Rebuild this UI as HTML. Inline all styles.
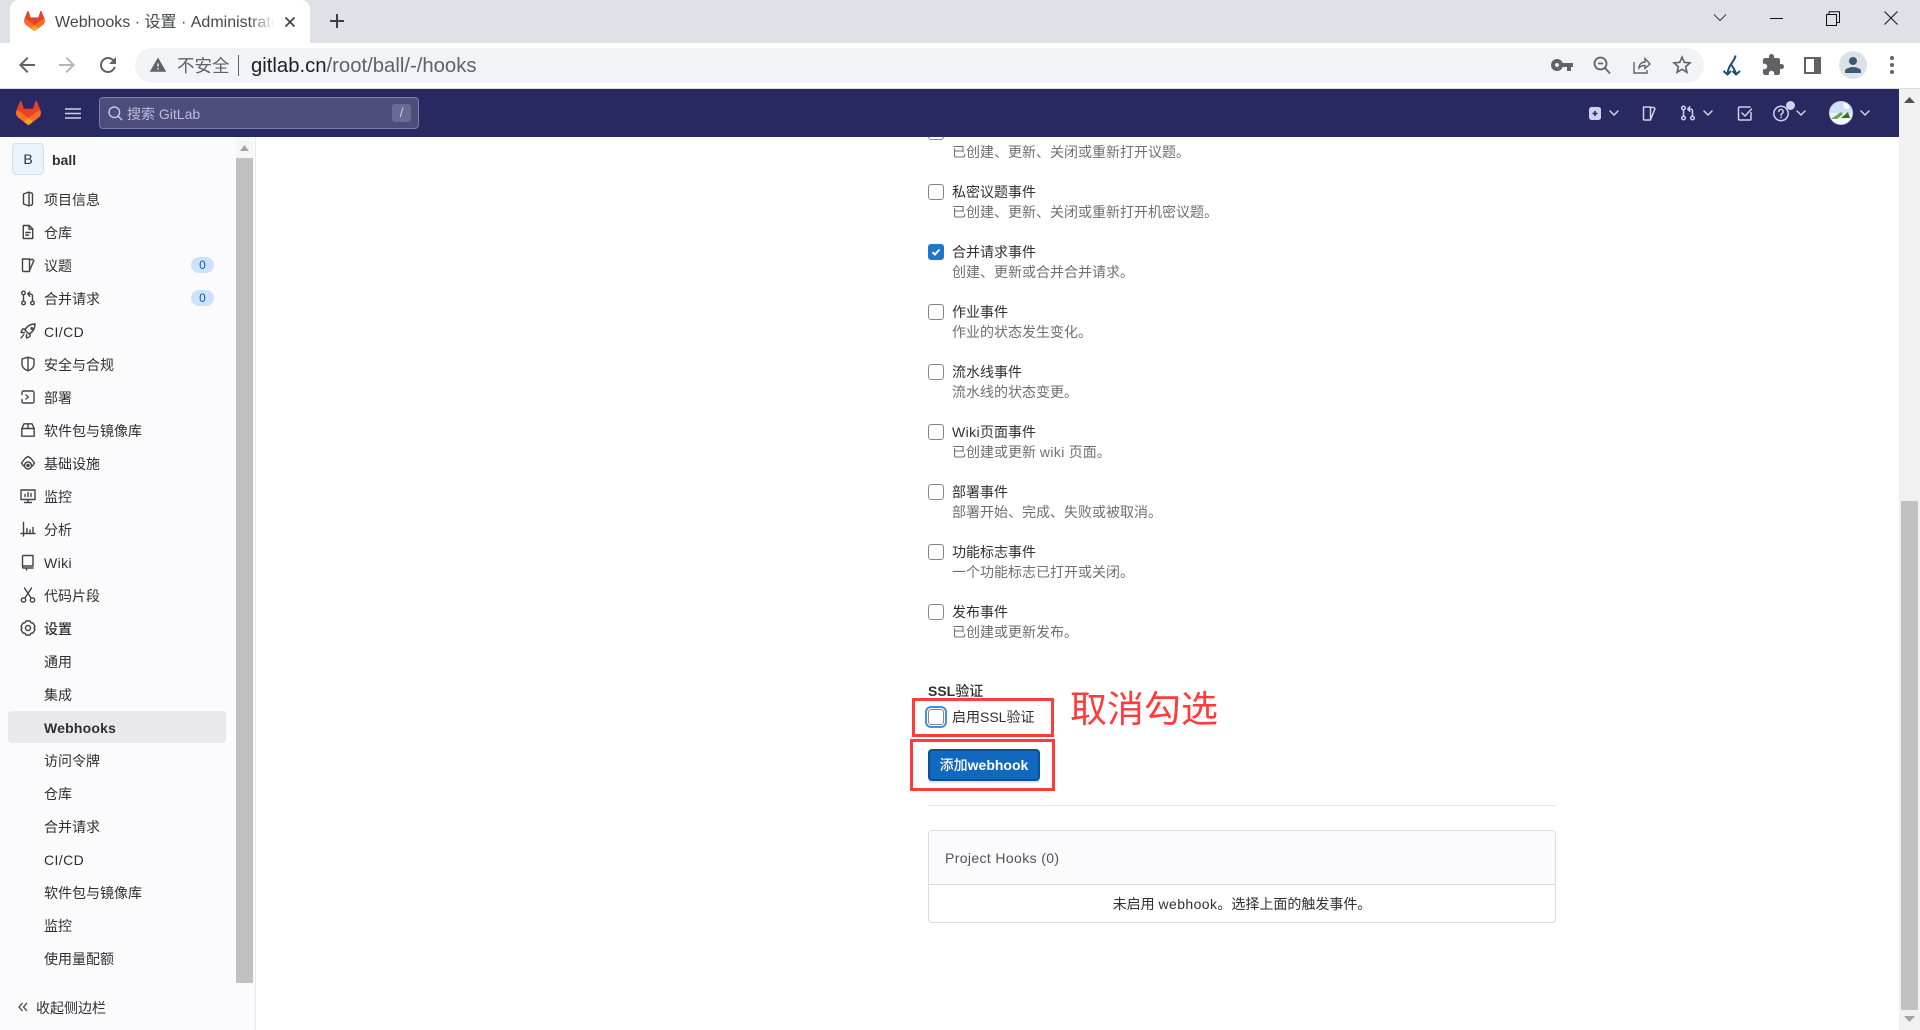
<!DOCTYPE html>
<html lang="zh">
<head>
<meta charset="utf-8">
<title>Webhooks · 设置 · Administrator</title>
<style>
html,body{margin:0;padding:0;width:1920px;height:1030px;overflow:hidden;background:#fff}
body{position:relative;font-family:"Liberation Sans","Noto Sans CJK SC",sans-serif;font-size:14px;color:#303030}
div,svg,span.a{position:absolute}
.t{height:20px;line-height:20px;white-space:nowrap}
.d{color:#6f6e75}
.b{font-weight:bold}
.m{font-weight:500}
.l{letter-spacing:.4px}
svg{overflow:visible}
.i{width:16px;height:16px;left:20px;fill:none;stroke:#444348;stroke-width:1.4;stroke-linecap:round;stroke-linejoin:round}
.h{fill:none;stroke:#d1d0e9;stroke-width:1.5;stroke-linecap:round;stroke-linejoin:round;width:16px;height:16px}
.c{left:928px;width:14px;height:14px;border:1px solid #89888d;border-radius:3px;background:#fff}
.g{fill:#5f6368;width:24px;height:24px}
</style>
</head>
<body>
<!-- tab strip -->
<div style="left:0;top:0;width:1920px;height:43px;background:#dee1e6"></div>
<div style="left:10px;top:0;width:300px;height:43px;background:#fff;border-radius:9px 9px 0 0"></div>
<svg style="left:24px;top:11px;width:21px;height:20px" viewBox="0 0 25 24">
<path d="m24.507 9.5-.034-.09L21.082.562a.896.896 0 0 0-1.694.091l-2.29 7.01H7.825L5.535.653a.898.898 0 0 0-1.694-.09L.451 9.411.416 9.5a6.297 6.297 0 0 0 2.09 7.278l.012.01.03.022 5.16 3.867 2.56 1.935 1.554 1.176a1.051 1.051 0 0 0 1.268 0l1.555-1.176 2.56-1.935 5.197-3.89.014-.01A6.297 6.297 0 0 0 24.507 9.5Z" fill="#E24329"/>
<path d="m24.507 9.5-.034-.09a11.44 11.44 0 0 0-4.56 2.051l-7.447 5.632 4.742 3.584 5.197-3.89.014-.01A6.297 6.297 0 0 0 24.507 9.5Z" fill="#FC6D26"/>
<path d="m7.707 20.677 2.56 1.935 1.555 1.176a1.051 1.051 0 0 0 1.268 0l1.555-1.176 2.56-1.935-4.743-3.584-4.755 3.584Z" fill="#FCA326"/>
<path d="M5.01 11.461a11.43 11.43 0 0 0-4.56-2.05L.416 9.5a6.297 6.297 0 0 0 2.09 7.278l.012.01.03.022 5.16 3.867 4.745-3.584-7.444-5.632Z" fill="#FC6D26"/>
</svg>
<div class="t" style="left:55px;top:13px;width:220px;overflow:hidden;font-size:16px;color:#45474a;-webkit-mask-image:linear-gradient(90deg,#000 88%,transparent);mask-image:linear-gradient(90deg,#000 88%,transparent)">Webhooks · 设置 · Administrator</div>
<svg style="left:284px;top:16px;width:12px;height:12px" viewBox="0 0 12 12"><path d="M1.500 1.500l9 9M10.500 1.500l-9 9" stroke="#3c4043" stroke-width="1.600" fill="none"/></svg>
<svg style="left:329px;top:13px;width:16px;height:16px" viewBox="0 0 16 16"><path d="M8 1v14M1 8h14" stroke="#3c4043" stroke-width="2" fill="none"/></svg>
<svg style="left:1713px;top:13px;width:14px;height:10px" viewBox="0 0 14 10"><path d="M1 1.500l6 6 6-6" stroke="#3c4043" stroke-width="1" fill="none"/></svg>
<div style="left:1770px;top:18px;width:13px;height:1.2px;background:#111"></div>
<svg style="left:1826px;top:11px;width:14px;height:15px" viewBox="0 0 14 15"><path d="M.5 3.500h10v11H.5zM3 3.500V.8h10.500v10.700h-3" stroke="#111" stroke-width="1" fill="none"/></svg>
<svg style="left:1884px;top:11px;width:14px;height:14px" viewBox="0 0 14 14"><path d="M.5.5l13 13M13.500.5l-13 13" stroke="#111" stroke-width="1" fill="none"/></svg>

<!-- toolbar -->
<div style="left:0;top:43px;width:1920px;height:45px;background:#fff"></div>
<div style="left:0;top:88px;width:1920px;height:1px;background:#dadce0"></div>
<div style="left:135px;top:48px;width:1569px;height:35px;border-radius:18px;background:#f1f3f4"></div>
<svg class="g" style="left:15px;top:53px" viewBox="0 0 24 24"><path d="M20 11H7.830l5.590-5.590L12 4l-8 8 8 8 1.410-1.410L7.830 13H20v-2z"/></svg>
<svg class="g" style="left:55px;top:53px;fill:#b4b6b9" viewBox="0 0 24 24"><path d="M12 4l-1.410 1.410L16.170 11H4v2h12.170l-5.580 5.590L12 20l8-8z"/></svg>
<svg class="g" style="left:96px;top:53px" viewBox="0 0 24 24"><path d="M17.650 6.350C16.200 4.900 14.210 4 12 4c-4.420 0-7.990 3.580-7.990 8s3.570 8 7.990 8c3.730 0 6.840-2.550 7.730-6h-2.080c-.82 2.330-3.040 4-5.650 4-3.310 0-6-2.690-6-6s2.690-6 6-6c1.660 0 3.140.69 4.220 1.780L13 11h7V4l-2.350 2.350z"/></svg>
<svg style="left:149px;top:56px;width:18px;height:18px;fill:#5f6368" viewBox="0 0 24 24"><path d="M1 21h22L12 2 1 21zm12-3h-2v-2h2v2zm0-4h-2v-4h2v4z"/></svg>
<div class="t" style="left:177px;top:56px;font-size:17.5px;color:#5f6368">不安全</div>
<div style="left:238px;top:55px;width:1px;height:21px;background:#5f6368"></div>
<div class="t" style="left:251px;top:56px;font-size:20.3px;color:#5f6368"><span style="color:#202124">gitlab.cn</span>/root/ball/-/hooks</div>
<svg class="g" style="left:1550px;top:53px" viewBox="0 0 24 24"><path d="M12.650 10C11.830 7.670 9.610 6 7 6c-3.310 0-6 2.690-6 6s2.690 6 6 6c2.610 0 4.830-1.670 5.650-4H17v4h4v-4h2v-4H12.650zM7 14c-1.100 0-2-.9-2-2s.9-2 2-2 2 .9 2 2-.9 2-2 2z"/></svg>
<svg style="left:1593px;top:56px;width:18px;height:18px" viewBox="0 0 18 18" fill="none" stroke="#5f6368" stroke-width="1.8"><circle cx="7.500" cy="7.500" r="6"/><path d="M12 12l5 5.500M5 7.500h5"/></svg>
<svg style="left:1633px;top:56px;width:18px;height:18px" viewBox="0 0 18 18" fill="none" stroke="#5f6368" stroke-width="1.4"><path d="M1 6v11h13v-3M6 12c0-4 3-6 6-6V2.500l5 5.500-5 4.500V9.500c-3 0-5 1-6 2.500z"/></svg>
<svg class="g" style="left:1670px;top:53px" viewBox="0 0 24 24"><path d="M22 9.240l-7.190-.62L12 2 9.190 8.630 2 9.240l5.460 4.730L5.820 21 12 17.270 18.180 21l-1.630-7.030L22 9.240zM12 15.400l-3.760 2.270 1-4.280-3.320-2.880 4.380-.38L12 6.100l1.710 4.040 4.380.38-3.320 2.880 1 4.280L12 15.400z"/></svg>
<svg style="left:1720px;top:53px;width:24px;height:24px" viewBox="0 0 24 24" fill="none" stroke="#1d4f6e" stroke-width="2"><path d="M15.500 2.500C15 8 8 12 7.500 21M11.500 12c2 3 4 6 4.500 9M3.500 18l4 3.500 3.500-3.500M12.500 18l3.500 3.500 4-3.500"/></svg>
<svg class="g" style="left:1761px;top:53px" viewBox="0 0 24 24"><path d="M20.500 11H19V7c0-1.100-.9-2-2-2h-4V3.500C13 2.120 11.880 1 10.500 1S8 2.120 8 3.500V5H4c-1.100 0-1.990.9-1.990 2v3.800H3.500c1.490 0 2.700 1.210 2.700 2.700s-1.210 2.700-2.700 2.700H2V20c0 1.100.9 2 2 2h3.800v-1.500c0-1.490 1.210-2.700 2.700-2.700 1.490 0 2.700 1.210 2.700 2.700V22H17c1.100 0 2-.9 2-2v-4h1.500c1.380 0 2.500-1.120 2.500-2.500S21.880 11 20.500 11z"/></svg>
<div style="left:1804px;top:57px;width:8px;height:13px;background:#fff;border:solid #5f6368;border-width:2px 7px 2px 2px"></div>
<div style="left:1839px;top:51px;width:28px;height:28px;border-radius:50%;background:#dee1e6"></div>
<svg class="g" style="left:1841px;top:53px;fill:#3c5a78" viewBox="0 0 24 24"><path d="M12 12c2.210 0 4-1.790 4-4s-1.790-4-4-4-4 1.790-4 4 1.790 4 4 4zm0 2c-2.670 0-8 1.340-8 4v2h16v-2c0-2.660-5.330-4-8-4z"/></svg>
<svg style="left:1889px;top:55px;width:6px;height:20px" viewBox="0 0 6 20" fill="#5f6368"><circle cx="3" cy="3" r="2"/><circle cx="3" cy="10" r="2"/><circle cx="3" cy="17" r="2"/></svg>

<!-- gitlab header -->
<div style="left:0;top:89px;width:1899px;height:48px;background:#292961"></div>
<svg style="left:16px;top:101px;width:25px;height:24px" viewBox="0 0 25 24">
<path d="m24.507 9.5-.034-.09L21.082.562a.896.896 0 0 0-1.694.091l-2.29 7.01H7.825L5.535.653a.898.898 0 0 0-1.694-.09L.451 9.411.416 9.5a6.297 6.297 0 0 0 2.09 7.278l.012.01.03.022 5.16 3.867 2.56 1.935 1.554 1.176a1.051 1.051 0 0 0 1.268 0l1.555-1.176 2.56-1.935 5.197-3.89.014-.01A6.297 6.297 0 0 0 24.507 9.5Z" fill="#E24329"/>
<path d="m24.507 9.5-.034-.09a11.44 11.44 0 0 0-4.56 2.051l-7.447 5.632 4.742 3.584 5.197-3.89.014-.01A6.297 6.297 0 0 0 24.507 9.5Z" fill="#FC6D26"/>
<path d="m7.707 20.677 2.56 1.935 1.555 1.176a1.051 1.051 0 0 0 1.268 0l1.555-1.176 2.56-1.935-4.743-3.584-4.755 3.584Z" fill="#FCA326"/>
<path d="M5.01 11.461a11.43 11.43 0 0 0-4.56-2.05L.416 9.5a6.297 6.297 0 0 0 2.09 7.278l.012.01.03.022 5.16 3.867 4.745-3.584-7.444-5.632Z" fill="#FC6D26"/>
</svg>
<svg style="left:65px;top:108px;width:16px;height:11px" viewBox="0 0 16 11"><path d="M0 1h16M0 5.500h16M0 10h16" stroke="#d1d0e9" stroke-width="1.500" fill="none"/></svg>
<div style="left:99px;top:97px;width:318px;height:30px;background:#4d4c7d;border:1px solid #7d7ca6;border-radius:4px"></div>
<svg style="left:108px;top:106px;width:15px;height:15px" viewBox="0 0 15 15" fill="none" stroke="#c9c8e4" stroke-width="1.400"><circle cx="6.300" cy="6.300" r="5.300"/><path d="M10.200 10.200l4 4"/></svg>
<div class="t" style="left:127px;top:103px;color:#bfbedd"><span style="position:relative;top:.5px">搜索 GitLab</span></div>
<div class="t" style="left:392px;top:104px;width:19px;height:18px;line-height:18px;background:#6b6a95;border-radius:3px;text-align:center;color:#d1d0e9;font-size:13px">/</div>

<svg style="left:1589px;top:107px;width:12px;height:13px" viewBox="0 0 12 13"><rect width="12" height="13" rx="2.500" fill="#d1d0e9"/><path d="M6 4v5M3.500 6.500h5" stroke="#292961" stroke-width="1.600"/></svg>
<svg class="h" style="left:1609px;top:109px;width:10px;height:8px" viewBox="0 0 10 8"><path d="M1 2l4 4 4-4"/></svg>
<svg class="h" style="left:1641px;top:105px" viewBox="0 0 16 16"><path d="M2.500 2h7v13h-6a1 1 0 0 1-1-1zM9.500 2.500h3.500l1 1.200-4.500 11"/></svg>
<svg class="h" style="left:1680px;top:105px" viewBox="0 0 16 16"><circle cx="3.500" cy="3" r="1.800"/><circle cx="3.500" cy="13" r="1.800"/><circle cx="12.500" cy="13" r="1.800"/><path d="M3.500 5v6M12.500 11V6a2 2 0 0 0-2-2H8M9.800 1.800L7.700 4l2.100 2.200"/></svg>
<svg class="h" style="left:1703px;top:109px;width:10px;height:8px" viewBox="0 0 10 8"><path d="M1 2l4 4 4-4"/></svg>
<svg class="h" style="left:1737px;top:105px" viewBox="0 0 16 16"><path d="M14 7.500V14a1 1 0 0 1-1 1H2.500a1 1 0 0 1-1-1V3a1 1 0 0 1 1-1H13M5 8l3 3 6.500-7"/></svg>
<svg class="h" style="left:1773px;top:105px" viewBox="0 0 16 16"><circle cx="8" cy="8.500" r="7.200"/><path d="M5.800 6.500a2.200 2.200 0 1 1 3.400 1.900c-.8.5-1.200 1-1.200 1.800M8 12.300v.2"/></svg>
<div style="left:1786px;top:101px;width:9px;height:9px;border-radius:50%;background:#d1d0e9"></div>
<svg class="h" style="left:1796px;top:109px;width:10px;height:8px" viewBox="0 0 10 8"><path d="M1 2l4 4 4-4"/></svg>
<svg style="left:1829px;top:101px;width:24px;height:24px" viewBox="0 0 24 24"><defs><clipPath id="av"><circle cx="12" cy="12" r="11.500"/></clipPath></defs><g clip-path="url(#av)"><rect width="24" height="24" fill="#eef3fa"/><path d="M0 0h24v12H0z" fill="#cfe2f5"/><path d="M2 18l10-7 2 2-6 5z" fill="#6aa84f"/><path d="M12 17l7-6 2 6z" fill="#38761d"/><path d="M0 18h24v6H0z" fill="#fff"/><path d="M14 2h6v6h-4z" fill="#fff"/></g><circle cx="12" cy="12" r="11.500" fill="none" stroke="#d1d0e9"/></svg>
<svg class="h" style="left:1860px;top:109px;width:10px;height:8px" viewBox="0 0 10 8"><path d="M1 2l4 4 4-4"/></svg>

<!-- page scrollbar -->
<div style="left:1899px;top:89px;width:21px;height:941px;background:#f1f1f1"></div>
<div style="left:1901px;top:501px;width:17px;height:509px;background:#c1c1c1"></div>
<svg style="left:1904px;top:97px;width:11px;height:6px" viewBox="0 0 11 6"><path d="M5.500 0L11 6H0z" fill="#505050"/></svg>
<svg style="left:1904px;top:1016px;width:11px;height:6px" viewBox="0 0 11 6"><path d="M0 0h11L5.500 6z" fill="#a3a3a3"/></svg>

<!-- sidebar -->
<div style="left:0;top:137px;width:255px;height:893px;background:#fbfafd;border-right:1px solid #e9e9eb"></div>
<div style="left:236px;top:137px;width:17px;height:846px;background:#f6f6f7"></div>
<div style="left:236px;top:158px;width:17px;height:825px;background:#c1c1c1"></div>
<svg style="left:240px;top:145px;width:9px;height:6px" viewBox="0 0 9 6"><path d="M4.500 0L9 6H0z" fill="#a3a3a3"/></svg>

<div style="left:12px;top:143px;width:30px;height:30px;background:#e8f3fc;border:1px solid #d5dfe9;border-radius:4px;text-align:center;line-height:30px;color:#303030;font-size:14px">B</div>
<div class="t b" style="left:52px;top:150px">ball</div>

<svg class="i" style="top:191px" viewBox="0 0 16 16"><path d="M3.500 3l5.500-2v14l-5.500-2zM9 1.800h2a1.500 1.500 0 0 1 1.500 1.500v9.400a1.500 1.500 0 0 1-1.500 1.500H9"/></svg>
<div class="t" style="left:44px;top:190px">项目信息</div>
<svg class="i" style="top:224px" viewBox="0 0 16 16"><path d="M3.300 1.500h6l3.400 3.400v9.600H3.300zM9 1.700v3.500h3.500M5.800 8.500h4.400M5.800 11h2.700"/></svg>
<div class="t" style="left:44px;top:223px">仓库</div>
<svg class="i" style="top:257px" viewBox="0 0 16 16"><path d="M2.500 2h7v12.500h-6a1 1 0 0 1-1-1zM9.500 2.500h3.300l1 1.200-4.300 10"/></svg>
<div class="t" style="left:44px;top:256px">议题</div>
<div style="left:191px;top:257px;width:23px;height:16px;border-radius:8px;background:#cbe2f9;color:#0b5cad;font-size:12px;line-height:16px;text-align:center">0</div>
<svg class="i" style="top:290px" viewBox="0 0 16 16"><circle cx="3.500" cy="3" r="1.800"/><circle cx="3.500" cy="13" r="1.800"/><circle cx="12.500" cy="13" r="1.800"/><path d="M3.500 5v6M12.500 11V6a2 2 0 0 0-2-2H8M9.800 1.800L7.700 4l2.100 2.200"/></svg>
<div class="t" style="left:44px;top:289px">合并请求</div>
<div style="left:191px;top:290px;width:23px;height:16px;border-radius:8px;background:#cbe2f9;color:#0b5cad;font-size:12px;line-height:16px;text-align:center">0</div>
<svg class="i" style="top:323px" viewBox="0 0 16 16"><path d="M15 1c-4.500 0-8 2-10 6l4 4c4-2 6-5.500 6-10zM5.500 6H2.500L1 9.500h3.500M10 10.500v3L6.500 15v-3.500M3.800 11.500L1 15M11 5.500a.8.800 0 1 0 0-.1"/></svg>
<div class="t l" style="left:44px;top:322px">CI/CD</div>
<svg class="i" style="top:356px" viewBox="0 0 16 16"><path d="M8 1.200L2 3v5c0 3 2.500 5.500 6 6.800 3.500-1.300 6-3.800 6-6.800V3zM8 1.500v13"/></svg>
<div class="t" style="left:44px;top:355px">安全与合规</div>
<svg class="i" style="top:389px" viewBox="0 0 16 16"><path d="M2 5.500V3.500C2 2.700 2.700 2 3.500 2h9c.8 0 1.500.7 1.500 1.500v9c0 .8-.7 1.500-1.500 1.500h-9C2.700 14 2 13.300 2 12.500V10.500M6 6l2.300 2L6 10"/></svg>
<div class="t" style="left:44px;top:388px">部署</div>
<svg class="i" style="top:422px" viewBox="0 0 16 16"><path d="M1.800 6.500L4 1.800h8l2.200 4.700v7.700H1.800zM1.800 6.500h12.400M8 1.800v4.700"/></svg>
<div class="t" style="left:44px;top:421px">软件包与镜像库</div>
<svg class="i" style="top:455px" viewBox="0 0 16 16"><path d="M1.500 8L5 3.500 8 1.500l3 2L14.500 8l-2 3M1.500 8l2 3"/><circle cx="8" cy="10.500" r="3.500"/><circle cx="8" cy="10.500" r="1"/></svg>
<div class="t" style="left:44px;top:454px">基础设施</div>
<svg class="i" style="top:488px" viewBox="0 0 16 16"><path d="M1 2h14v9.500H1zM5 8.500V6.500M8 8.500V4.500M11 8.500V5.500M8 11.500V14M4.500 14.500h7"/></svg>
<div class="t" style="left:44px;top:487px">监控</div>
<svg class="i" style="top:521px" viewBox="0 0 16 16"><path d="M3.500 1.500v13.500M1 12.500h14M7 7.500v5M10 9v3.500M13 6.500v6"/></svg>
<div class="t" style="left:44px;top:520px">分析</div>
<svg class="i" style="top:554px" viewBox="0 0 16 16"><path d="M2.500 12V2.500a1 1 0 0 1 1-1h9.500v10.500H3.500a1 1 0 0 0-1 1 1 1 0 0 0 1 1H13M6.500 14.500V16"/></svg>
<div class="t l" style="left:44px;top:553px">Wiki</div>
<svg class="i" style="top:587px" viewBox="0 0 16 16"><circle cx="3.500" cy="13" r="2.200"/><circle cx="12.500" cy="13" r="2.200"/><path d="M4.800 11.200L11.500 1M11.200 11.200L4.500 1"/></svg>
<div class="t" style="left:44px;top:586px">代码片段</div>
<svg class="i" style="top:620px" viewBox="0 0 16 16"><path d="M6 1h4l1 1.800 2 .2 2 3.500-1 1.500 1 1.500-2 3.500-2 .2-1 1.800H6l-1-1.800-2-.2-2-3.500 1-1.500-1-1.500 2-3.500 2-.2z"/><circle cx="8" cy="8" r="2.500"/></svg>
<div class="t m" style="left:44px;top:619px">设置</div>
<div class="t" style="left:44px;top:652px">通用</div>
<div class="t" style="left:44px;top:685px">集成</div>
<div style="left:8px;top:711px;width:218px;height:32px;background:#e9e9eb;border-radius:4px"></div>
<div class="t b l" style="left:44px;top:718px;letter-spacing:.2px">Webhooks</div>
<div class="t" style="left:44px;top:751px">访问令牌</div>
<div class="t" style="left:44px;top:784px">仓库</div>
<div class="t" style="left:44px;top:817px">合并请求</div>
<div class="t l" style="left:44px;top:850px">CI/CD</div>
<div class="t" style="left:44px;top:883px">软件包与镜像库</div>
<div class="t" style="left:44px;top:916px">监控</div>
<div class="t" style="left:44px;top:949px">使用量配额</div>
<svg style="left:18px;top:1002px;width:10px;height:10px" viewBox="0 0 10 10" fill="none" stroke="#444348" stroke-width="1.300"><path d="M4.500 1L1 5l3.500 4M9 1L5.500 5 9 9"/></svg>
<div class="t" style="left:36px;top:998px">收起侧边栏</div>

<!-- main content -->
<div style="left:928px;top:137px;width:16px;height:3px;overflow:hidden"><div class="c" style="left:0;top:-13px"></div></div>
<div class="t d" style="left:952px;top:142px">已创建、更新、关闭或重新打开议题。</div>

<div class="c" style="top:184px"></div>
<div class="t" style="left:952px;top:182px">私密议题事件</div>
<div class="t d" style="left:952px;top:202px">已创建、更新、关闭或重新打开机密议题。</div>

<div class="c" style="top:244px;background:#1f75cb;border-color:#1f75cb"></div>
<svg style="left:931px;top:247px;width:10px;height:10px" viewBox="0 0 10 10"><path d="M1.500 5.200l2.500 2.300 4.500-5" stroke="#fff" stroke-width="2" fill="none"/></svg>
<div class="t" style="left:952px;top:242px">合并请求事件</div>
<div class="t d" style="left:952px;top:262px">创建、更新或合并合并请求。</div>

<div class="c" style="top:304px"></div>
<div class="t" style="left:952px;top:302px">作业事件</div>
<div class="t d" style="left:952px;top:322px">作业的状态发生变化。</div>

<div class="c" style="top:364px"></div>
<div class="t" style="left:952px;top:362px">流水线事件</div>
<div class="t d" style="left:952px;top:382px">流水线的状态变更。</div>

<div class="c" style="top:424px"></div>
<div class="t" style="left:952px;top:422px"><span class="l">Wiki</span>页面事件</div>
<div class="t d" style="left:952px;top:442px">已创建或更新 <span class="l">wiki</span> 页面。</div>

<div class="c" style="top:484px"></div>
<div class="t" style="left:952px;top:482px">部署事件</div>
<div class="t d" style="left:952px;top:502px">部署开始、完成、失败或被取消。</div>

<div class="c" style="top:544px"></div>
<div class="t" style="left:952px;top:542px">功能标志事件</div>
<div class="t d" style="left:952px;top:562px">一个功能标志已打开或关闭。</div>

<div class="c" style="top:604px"></div>
<div class="t" style="left:952px;top:602px">发布事件</div>
<div class="t d" style="left:952px;top:622px">已创建或更新发布。</div>

<div class="t m" style="left:928px;top:681px"><b>SSL</b>验证</div>
<div class="c" style="top:709px;box-shadow:0 0 0 1px #fff,0 0 0 3px #428fdc"></div>
<div class="t" style="left:952px;top:707px">启用SSL验证</div>

<div class="m" style="left:928px;top:749px;width:108px;height:28px;border:2px solid #0b4f96;border-radius:4px;background:#1068bf;color:#fff;line-height:28px;text-align:center;font-size:14px;box-shadow:0 2px 1px #e4e4e7">添加<b>webhook</b></div>

<div style="left:912px;top:698px;width:136px;height:33px;border:3px solid #ff3b3b"></div>
<div style="left:910px;top:739px;width:139px;height:46px;border:3px solid #ff3b3b"></div>
<div style="left:1070px;top:685px;height:50px;line-height:50px;font-size:37px;color:#ff3b3b;white-space:nowrap">取消勾选</div>

<div style="left:928px;top:805px;width:628px;height:1px;background:#e6e6e8"></div>

<div style="left:928px;top:830px;width:626px;height:91px;border:1px solid #dcdcde;border-radius:4px;overflow:hidden;background:#fff">
  <div style="left:0;top:0;width:626px;height:53px;background:#fbfafd;border-bottom:1px solid #dcdcde"></div>
  <div class="t" style="left:16px;top:17px;color:#535158;letter-spacing:.37px">Project Hooks (0)</div>
  <div class="t" style="left:0;top:63px;width:626px;text-align:center">未启用 <span class="l">webhook</span>。选择上面的触发事件。</div>
</div>
</body>
</html>
